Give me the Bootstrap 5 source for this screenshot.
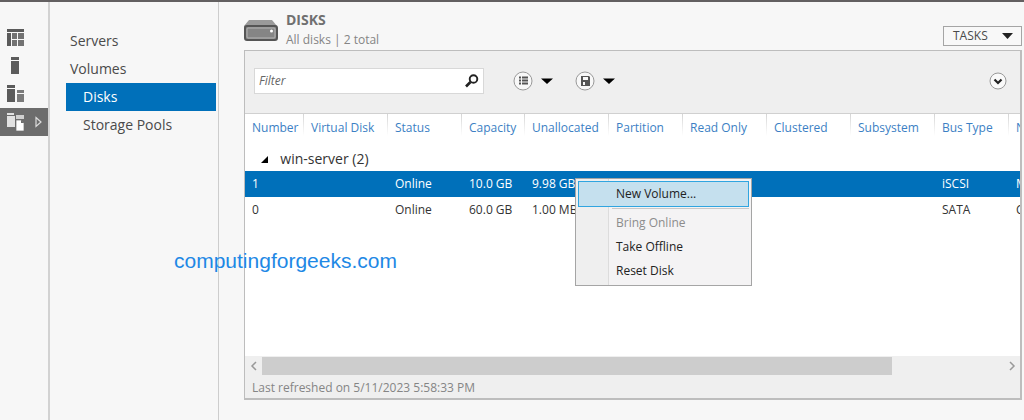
<!DOCTYPE html>
<html lang="en">
<head>
<meta charset="utf-8">
<meta name="viewport" content="width=device-width, initial-scale=1">
<title>Disks</title>
<link href="https://cdn.jsdelivr.net/npm/bootstrap@5.3.0/dist/css/bootstrap.min.css" rel="stylesheet">
<style>
body{font-family:"Open Sans","Noto Sans",sans-serif;font-size:12px;line-height:20px;color:#333;background:#f7f7f7;border-top:2px solid #636061}
.rail{width:48px;padding-top:22px;background:#f7f7f7}
.rail a{height:28px;padding-left:7px;color:#5b5b5b}
.rail a.active{background:#6d6d6d;color:#e2e2e2}
.side{width:171px;padding:25px 2px 0 16px;border-left:2px solid #d2d2d2;border-right:1px solid #cdcdcd}
.side .nav-link{font-size:14px;line-height:28px;padding:0 4px;color:#4a4a4a;border-radius:0}
.side .sub{padding-left:17px}
.side .nav-link.active{background:#0070ba;color:#fff}
.content{min-width:0;padding:8px 2px 20px 25px}
.head{height:40px}
.head h1{font-size:14px;line-height:20px;font-weight:700;color:#707070}
.head p{color:#858585}
.tasks{width:79px;height:20px;padding:0 7px 0 9px;border:1px solid #a5a5a5;background:#f8f8f8;line-height:18px;color:#4a4a4a}
.panel{border:2px solid #bdbdbd;border-top-width:1px;border-left-width:1px;background:#efefef}
.tools{height:63px;padding:0 12px 2px 9px;border-bottom:1px solid #d0d0d0}
.search{width:230px;height:26px;background:#fff;border:1px solid #d8d8d8}
.search input{font-size:12px;line-height:20px;padding:0 4px;border:0;background:none;font-style:italic;color:#666;border-radius:0}
.search input::placeholder{color:#666}
.bare{border:0;background:none;padding:0;display:flex;align-items:center}
.grid-area{background:#fff;height:242px;overflow:hidden}
.disks{table-layout:fixed;width:822px;margin:0;white-space:nowrap}
.disks th,.disks td{padding:0 0 0 7px;height:26px;font-weight:400;vertical-align:middle;color:#333}
.disks thead th{color:#3c7fc4;height:27px;background:linear-gradient(#d5d5d5,#fff) right top/1px 22px no-repeat}
.disks .group td{height:30px;padding:6px 0 0 15px;font-size:14px}
.disks .picked td{background:#0070ba;color:#fff}
.scroller{height:20px}
.scroller button{width:17px;justify-content:center}
.thumb{width:85%;height:18px;background:#cdcdcd}
.status{height:22px;padding-left:7px;line-height:23px;color:#858585}
.context{left:330px;top:127px;width:177px;min-width:0;padding:2px;border:1px solid #a5a5a5;border-radius:0;font-size:12px;background:linear-gradient(90deg,#efefef 32px,#dcdcdc 32px,#dcdcdc 33px,#f4f3f4 33px)}
.context .dropdown-item{padding:0 0 0 38px;line-height:24px;color:#222;border:0}
.context .dropdown-item.disabled{color:#8c8c8c}
.context .dropdown-item.active{padding-left:37px;background:#c5e0ee;border:1px solid #30a5e0;margin-bottom:1px}
.context .dropdown-divider{margin:0 0 2px 34px;border-color:#c8c8c8}
.mark-link{left:174px;top:245px;font:21px/28px "Liberation Sans",Arial,sans-serif;color:#1e88e5;text-decoration:none}
</style>
</head>
<body>
<div class="d-flex position-relative min-vh-100">
  <nav class="rail flex-shrink-0" aria-label="Sections">
    <a href="#" class="d-flex align-items-center" aria-label="Dashboard"><svg width="18" height="18" fill="currentColor"><path d="M0 0h17v3H0zM0 4h4v13H0z"/><path opacity=".85" d="M5 4h5v6H5zM11 4h6v6h-6zM5 11h5v6H5zM11 11h6v6h-6z"/></svg></a>
    <a href="#" class="d-flex align-items-center" aria-label="Local server"><svg width="18" height="18" fill="currentColor"><path d="M4 0h8v3H4zM4 4h8v13H4z"/></svg></a>
    <a href="#" class="d-flex align-items-center" aria-label="All servers"><svg width="18" height="18" fill="currentColor"><path d="M0 0h8v3H0zM0 4h8v13H0z"/><path opacity=".8" d="M10 5h7v3h-7zM10 9h7v8h-7z"/></svg></a>
    <a href="#" class="active d-flex align-items-center" aria-label="Storage services"><svg width="36" height="18" fill="currentColor"><path d="M0 1V0h7v2H0zM0 3h8v11H0z"/><path opacity=".85" d="M9 2h8v4H9z"/><path fill="#fff" stroke="#6d6d6d" stroke-width=".7" d="M9 7h5l3 3v8H9z"/><path fill="#6d6d6d" d="M14 7v3h3z"/><path fill="none" stroke="#ddd" stroke-width="1.2" d="M29 4.500l5 4.500-5 4.500z"/></svg></a>
  </nav>
  <nav class="side nav flex-column flex-nowrap flex-shrink-0" aria-label="Storage">
    <a class="nav-link" href="#">Servers</a>
    <a class="nav-link" href="#">Volumes</a>
    <a class="nav-link sub active" href="#" aria-current="page">Disks</a>
    <a class="nav-link sub" href="#">Storage Pools</a>
  </nav>
  <main class="content flex-grow-1">
    <header class="head d-flex align-items-start">
      <svg class="mt-2 flex-shrink-0" width="34" height="26" viewBox="0 0 34 26"><path fill="#9a9a9a" d="M5 2h23l5 6v8H0V8z"/><rect x="1" y="8" width="32" height="14" rx="2" fill="#858585" stroke="#555" stroke-width="2"/><rect x="3" y="10" width="28" height="10" rx="1" fill="none" stroke="#b5b5b5"/><circle cx="27.500" cy="13" r="1.500" fill="#fff"/></svg>
      <div class="ms-1 ps-1"><h1 class="m-0">DISKS</h1><p class="m-0">All disks | 2 total</p></div>
      <button type="button" class="tasks ms-auto mt-auto mb-1 d-flex align-items-center justify-content-between">TASKS<svg width="12" height="6"><path d="M0 0h11L5.500 6z" fill="#222"/></svg></button>
    </header>
    <section class="panel position-relative">
      <div class="tools d-flex align-items-center">
        <div class="search d-flex align-items-center">
          <input type="text" class="form-control shadow-none" placeholder="Filter" aria-label="Filter">
          <button type="button" class="bare me-1" aria-label="Search"><svg width="14" height="14" fill="none" stroke="#222"><circle cx="8.500" cy="5" r="3.800" stroke-width="1.900"/><path d="M5.500 8L1 12.500" stroke-width="2.600"/></svg></button>
        </div>
        <button type="button" class="bare ms-4 ps-1" aria-label="Group by"><svg width="42" height="20"><circle cx="11" cy="10" r="9" fill="#f8f8f8" stroke="#999"/><path d="M7 6.500h2M7 9.500h2M7 12.500h2M10 6.500h6M10 9.500h6M10 12.500h6" stroke="#555" stroke-width="1.800"/><path d="M29 7.500h12L35 13z"/></svg></button>
        <button type="button" class="bare ms-3 ps-1" aria-label="Save filter"><svg width="42" height="20"><circle cx="11" cy="10" r="9" fill="#f8f8f8" stroke="#999"/><path fill="#555" fill-rule="evenodd" d="M7 5h8l1 1v9H7zM9 6v3h5V6zM9 11v3h2v-3z"/><path d="M29 7.500h12L35 13z"/></svg></button>
        <button type="button" class="bare ms-auto" aria-label="Expand"><svg width="20" height="20"><circle cx="10" cy="10" r="8" fill="#fafafa" stroke="#999"/><path d="M6.500 8.500l3.500 3.500 3.500-3.500" fill="none" stroke="#222" stroke-width="2.200"/></svg></button>
      </div>
      <div class="grid-area">
        <table class="disks">
          <colgroup><col style="width:59px"><col style="width:84px"><col style="width:74px"><col style="width:63px"><col style="width:84px"><col style="width:74px"><col style="width:84px"><col style="width:84px"><col style="width:84px"><col style="width:74px"><col></colgroup>
          <thead><tr><th>Number</th><th>Virtual Disk</th><th>Status</th><th>Capacity</th><th>Unallocated</th><th>Partition</th><th>Read Only</th><th>Clustered</th><th>Subsystem</th><th>Bus Type</th><th>N</th></tr></thead>
          <tbody>
            <tr class="group"><td colspan="11"><svg class="me-2" width="10" height="10"><path d="M8 1v7H1z"/></svg>&thinsp;win-server (2)</td></tr>
            <tr class="picked"><td>1</td><td></td><td>Online</td><td>10.0 GB</td><td>9.98 GB</td><td></td><td></td><td></td><td></td><td>iSCSI</td><td>M</td></tr>
            <tr><td>0</td><td></td><td>Online</td><td>60.0 GB</td><td>1.00 MB</td><td></td><td></td><td></td><td></td><td>SATA</td><td>C</td></tr>
          </tbody>
        </table>
      </div>
      <div class="scroller d-flex align-items-center">
        <button type="button" class="bare" aria-label="Scroll left"><svg width="8" height="10" fill="none" stroke="#999" stroke-width="1.500"><path d="M6 1L2 5l4 4"/></svg></button>
        <div class="flex-grow-1"><div class="thumb"></div></div>
        <button type="button" class="bare" aria-label="Scroll right"><svg width="8" height="10" fill="none" stroke="#999" stroke-width="1.500"><path d="M2 1l4 4-4 4"/></svg></button>
      </div>
      <div class="status">Last refreshed on 5/11/2023 5:58:33 PM</div>
      <div class="context dropdown-menu show">
        <button type="button" class="dropdown-item active">New Volume...</button>
        <hr class="dropdown-divider">
        <button type="button" class="dropdown-item disabled" disabled>Bring Online</button>
        <button type="button" class="dropdown-item">Take Offline</button>
        <button type="button" class="dropdown-item">Reset Disk</button>
      </div>
    </section>
  </main>
  <a class="mark-link position-absolute" href="#">computingforgeeks.com</a>
</div>
<script src="https://cdn.jsdelivr.net/npm/bootstrap@5.3.0/dist/js/bootstrap.bundle.min.js"></script>
</body>
</html>
